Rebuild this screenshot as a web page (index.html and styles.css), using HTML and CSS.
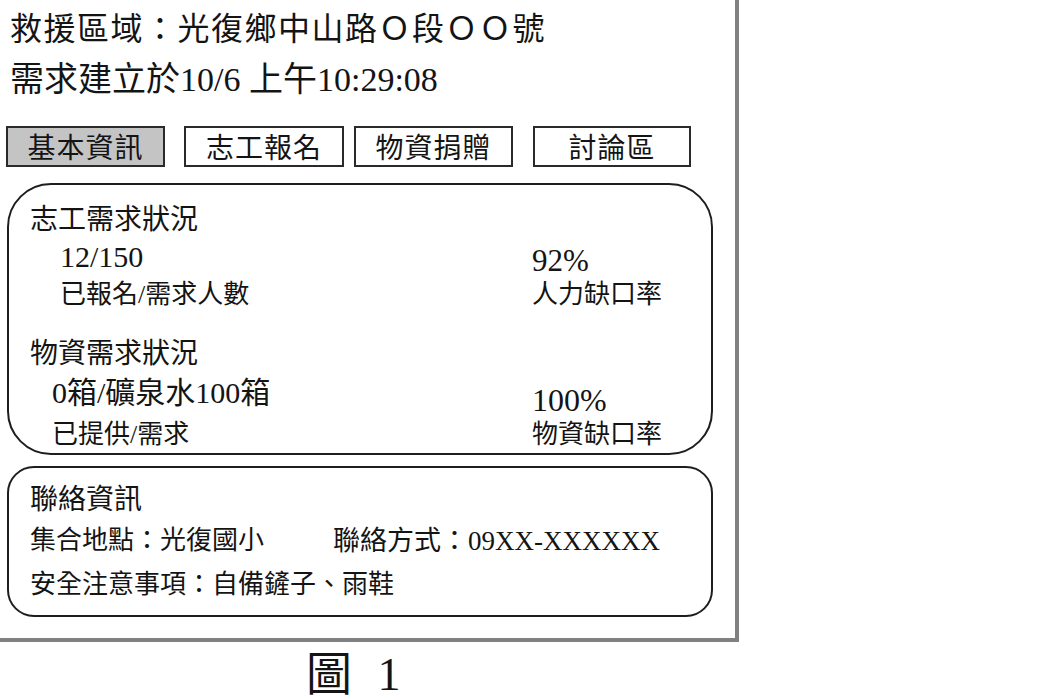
FILE: index.html
```html
<!DOCTYPE html>
<html lang="zh-Hant">
<head>
<meta charset="utf-8">
<title>救援需求</title>
<link rel="stylesheet" href="styles.css">
</head>
<body>
<div class="frame">
  <div class="title">救援區域：光復鄉中山路Ｏ段ＯＯ號</div>
  <div class="created">需求建立於10/6 上午10:29:08</div>
  <div class="tabs">
    <div class="tab tab-active tab-a">基本資訊</div>
    <div class="tab tab-b">志工報名</div>
    <div class="tab tab-c">物資捐贈</div>
    <div class="tab tab-d">討論區</div>
  </div>
  <div class="panel panel-status">
    <div class="heading">志工需求狀況</div>
    <div class="stats stats-vol">
      <div class="value">12/150</div>
      <div class="value value-right">92%</div>
      <div class="label">已報名/需求人數</div>
      <div class="label">人力缺口率</div>
    </div>
    <div class="heading heading-2">物資需求狀況</div>
    <div class="stats stats-sup">
      <div class="value value-mixed">0箱/礦泉水100箱</div>
      <div class="value value-right value-big">100%</div>
      <div class="label">已提供/需求</div>
      <div class="label">物資缺口率</div>
    </div>
  </div>
  <div class="panel panel-contact">
    <div class="heading">聯絡資訊</div>
    <div class="contact-row">
      <span class="place">集合地點：光復國小</span>
      <span class="phone">聯絡方式：09XX-XXXXXX</span>
    </div>
    <div class="contact-row">安全注意事項：自備鏟子、雨鞋</div>
  </div>
</div>
<div class="caption">圖 1</div>
</body>
</html>
```

FILE: styles.css
```css
html, body {
  margin: 0;
  padding: 0;
  background: #ffffff;
}

body {
  font-family: "Liberation Serif", "Noto Sans CJK TC", serif;
  color: #141414;
}

.frame {
  box-sizing: border-box;
  width: 739px;
  height: 642px;
  padding: 0 0 0 6px;
  border-right: 4px solid #818181;
  border-bottom: 4px solid #818181;
}

.title {
  font-family: "Noto Sans CJK TC", sans-serif;
  font-size: 32px;
  letter-spacing: 1.5px;
  line-height: 52px;
  padding-left: 4px;
  white-space: nowrap;
}

.created {
  font-size: 34px;
  line-height: 56px;
  padding-left: 4px;
  white-space: nowrap;
}

.tabs {
  display: flex;
  margin-top: 18px;
  height: 41px;
}

.tab {
  box-sizing: border-box;
  height: 41px;
  border: 2px solid #2a2a2a;
  font-family: "Noto Sans CJK TC", sans-serif;
  font-size: 28px;
  line-height: 36px;
  letter-spacing: 1px;
  text-align: center;
  background: #ffffff;
}

.tab-active {
  background: #c4c4c4;
}

.tab-a { width: 159px; }
.tab-b { width: 160px; margin-left: 19px; }
.tab-c { width: 159px; margin-left: 10px; }
.tab-d { width: 158px; margin-left: 20px; }

.panel {
  box-sizing: border-box;
  width: 706px;
  margin-left: 1px;
  border: 2px solid #1e1e1e;
  padding-left: 21px;
}

.panel-status {
  margin-top: 16px;
  height: 272px;
  border-radius: 44px;
  padding-top: 12px;
}

.panel-contact {
  margin-top: 11px;
  height: 151px;
  border-radius: 27px;
  padding-top: 7px;
}

.heading {
  font-family: "Noto Sans CJK TC", sans-serif;
  font-size: 28px;
  line-height: 40px;
  white-space: nowrap;
}

.heading-2 {
  margin-top: 18px;
}

.panel-contact .heading {
  line-height: 44px;
}

.stats {
  display: grid;
  white-space: nowrap;
}

.stats-vol {
  padding-left: 30px;
  grid-template-columns: 472px 1fr;
}

.stats-sup {
  padding-left: 22px;
  grid-template-columns: 480px 1fr;
}

.value {
  font-size: 30px;
  line-height: 40px;
}

.stats-sup .value {
  line-height: 44px;
}

.value-mixed {
  font-size: 30px;
}

.stats-vol .value-right {
  font-size: 31px;
  padding-top: 8px;
  line-height: 32px;
}

.stats-sup .value-big {
  font-size: 32px;
  padding-top: 14px;
  line-height: 30px;
}

.label {
  font-size: 26px;
  line-height: 36px;
}

.stats-sup .label {
  line-height: 40px;
}

.contact-row {
  display: flex;
  font-size: 26px;
  line-height: 44px;
  white-space: nowrap;
}

.place {
  width: 303px;
}

.phone {
  font-size: 27px;
}

.caption {
  font-family: "Liberation Serif", "Noto Sans CJK TC", serif;
  font-size: 46px;
  line-height: 66px;
  padding-left: 306px;
  word-spacing: 14px;
}
```
